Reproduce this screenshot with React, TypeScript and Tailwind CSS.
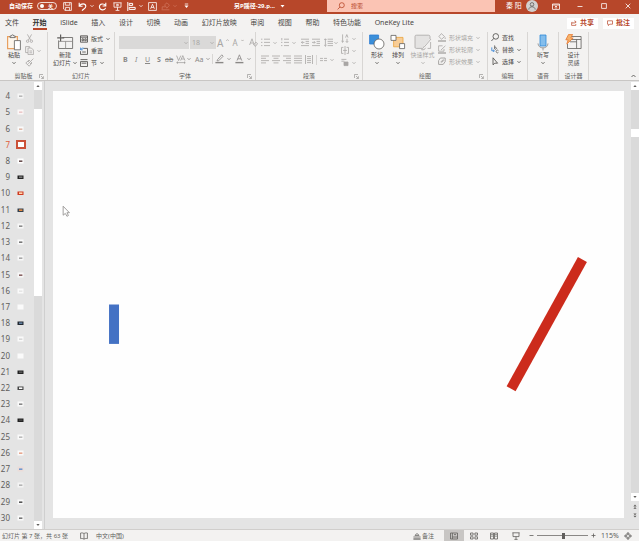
import { useState } from 'react';
import type { ReactNode } from 'react';

interface IconProps {
  w: number;
  h: number;
  children: ReactNode;
  className?: string;
}

function Icon({ w, h, children, className = '' }: IconProps) {
  return (
    <svg
      width={w}
      height={h}
      viewBox={`0 0 ${w} ${h}`}
      fill="none"
      stroke="currentColor"
      strokeWidth="0.8"
      className={`shrink-0 ${className}`}
      aria-hidden="true"
    >
      {children}
    </svg>
  );
}

const Caret = () => (
  <Icon w={4} h={4}>
    <path d="M0.5 1.2 2 2.7 3.5 1.2" />
  </Icon>
);

const SolidCaret = () => (
  <Icon w={5} h={4}>
    <path d="M0.5 1h4L2.5 3.4z" fill="currentColor" stroke="none" />
  </Icon>
);

interface ToolProps {
  label: string;
  children: ReactNode;
  className?: string;
}

function Tool({ label, children, className = '' }: ToolProps) {
  return (
    <button type="button" aria-label={label} className={`flex shrink-0 items-center gap-[3px] whitespace-nowrap ${className}`}>
      {children}
    </button>
  );
}

interface GroupProps {
  label: string;
  width: string;
  launcher?: boolean;
  children: ReactNode;
}

function Group({ label, width, launcher, children }: GroupProps) {
  return (
    <section className={`flex shrink-0 flex-col border-r border-[#d8d6d4] ${width}`}>
      <div className="flex h-[40px] items-start">{children}</div>
      <div className="flex h-[8px] items-center">
        <span className="w-2" />
        <h2 className="flex-1 whitespace-nowrap text-center leading-[8px] text-[#605e5c]">{label}</h2>
        <span className="w-2 text-[#8a8886]">
          {launcher && (
            <button type="button" aria-label={`${label}选项`} className="block">
              <Icon w={5} h={5}>
                <path d="M0.5 4V0.5H4M2 2l2.3 2.3M4.4 2.2v2.3H2.2" strokeWidth="0.6" />
              </Icon>
            </button>
          )}
        </span>
      </div>
    </section>
  );
}

function TitleBar() {
  const [autoSave, setAutoSave] = useState(false);
  const [query, setQuery] = useState('');

  return (
    <header className="flex h-[14px] shrink-0 items-center bg-[#b7472a] pb-[2px] text-white">
      <div className="flex w-[226px] shrink-0 items-center pl-[9px]">
        <label htmlFor="autosave" className="font-bold">自动保存</label>
        <input
          id="autosave"
          type="checkbox"
          checked={autoSave}
          onChange={(e) => setAutoSave(e.target.checked)}
          className="peer sr-only"
        />
        <label htmlFor="autosave" className="ml-[4px] flex h-[8px] w-5 items-center rounded-full border border-white/80 pl-[2px]">
          <span className="h-[4px] w-[4px] rounded-full bg-white" />
          <span className="ml-[4px] text-[5px] font-bold leading-none">关</span>
        </label>
        <Tool label="保存" className="ml-[6px]">
          <Icon w={9} h={9}>
            <path d="M0.6 0.6h7.8v7.8H2L0.6 7zM2.3 0.6v2.6h4.5V0.6M2.6 8.3V5.4h4v2.9" />
          </Icon>
        </Tool>
        <Tool label="撤消" className="ml-[6px] gap-[2px]">
          <Icon w={9} h={9}>
            <path d="M1.2 0.8v3.4h3.4M1.4 4C3 1.2 7.6 1 7.8 4.2 7.8 6.2 5.5 7 4 8.6" strokeWidth="1.1" />
          </Icon>
          <Caret />
        </Tool>
        <Tool label="恢复" className="ml-[4px]">
          <Icon w={9} h={9}>
            <path d="M7.8 0.8v3.2H4.6M7.6 3.6C6 1.2 1.6 1.4 1.4 4.8 1.6 8.4 6.6 9 7.6 5.8" strokeWidth="1.1" />
          </Icon>
        </Tool>
        <Tool label="从头开始" className="ml-[6px]">
          <Icon w={9} h={9}>
            <path d="M0.4 0.8h8.2M1 0.8v4.4h7V0.8M4.5 5.2v3M2.6 8.4h3.8M3.8 2v2.2L5.8 3z" />
          </Icon>
        </Tool>
        <Tool label="对齐" className="ml-[5px] gap-[3px]">
          <Icon w={9} h={9}>
            <path d="M0.8 0v9M2.2 1.4h3.4v2H2.2zM2.2 5.4h6v2h-6z" strokeWidth="1" />
          </Icon>
          <Caret />
        </Tool>
        <Tool label="文本框" className="ml-[5px]">
          <Icon w={9} h={9}>
            <path d="M0.6 0.6h7.8v7.8H0.6zM2.6 6.8l1.9-4.6 1.9 4.6M3.2 5.4h2.6" />
          </Icon>
        </Tool>
        <Tool label="形状" className="ml-[4px] gap-[3px] text-[#d0745c]">
          <Icon w={9} h={9}>
            <path d="M0.6 7.8h7.8M1.2 7.4V4.8h3M3.6 2.8 6 0.8l2.4 2.4-2.6 3z" />
          </Icon>
          <Caret />
        </Tool>
        <Tool label="自定义快速访问工具栏" className="ml-[7px]">
          <Icon w={5} h={6}>
            <path d="M0.8 1h3.4" />
            <path d="M0.5 2.6h4L2.5 5z" fill="currentColor" stroke="none" />
          </Icon>
        </Tool>
      </div>
      <div className="flex flex-1 items-center gap-[5px] whitespace-nowrap pl-2">
        <h1 className="font-bold">另P蹊径-29.p...</h1>
        <SolidCaret />
      </div>
      <label className="mr-[11px] flex h-[12px] w-[26.3%] shrink-0 items-center gap-[6px] bg-[#fbc4b4] pl-[10px] text-[#b7472a]">
        <Icon w={8} h={8}>
          <circle cx="4.8" cy="3.2" r="2.5" />
          <path d="M3 5 0.6 7.4" />
        </Icon>
        <input
          type="text"
          aria-label="搜索"
          value={query}
          onChange={(e) => setQuery(e.target.value)}
          placeholder="搜索"
          className="min-w-0 flex-1 bg-transparent outline-none placeholder:text-[#b7472a]"
        />
      </label>
      <div className="flex w-[133px] shrink-0 items-center">
        <span className="text-[7px]">秦 阳</span>
        <button type="button" aria-label="帐户" className="ml-[4px] h-[12px]">
          <Icon w={12} h={12}>
            <circle cx="6" cy="6" r="6" fill="#d2d0ce" stroke="none" />
            <circle cx="6" cy="4.4" r="1.8" stroke="#605e5c" />
            <path d="M2.8 9.6C3 5.8 9 5.8 9.2 9.6" stroke="#605e5c" />
          </Icon>
        </button>
        <Tool label="功能区显示选项" className="ml-[14px]">
          <Icon w={8} h={7}>
            <path d="M0.5 1h7v5.4h-7zM0.5 2h7M4 5.8V3.2M2.8 4.2 4 3l1.2 1.2" />
          </Icon>
        </Tool>
        <Tool label="最小化" className="ml-[17px]">
          <Icon w={6} h={6}><path d="M0.5 3.5h5" /></Icon>
        </Tool>
        <Tool label="最大化" className="ml-[18px]">
          <Icon w={6} h={6}><path d="M0.6 0.6h4.8v4.8H0.6z" /></Icon>
        </Tool>
        <Tool label="关闭" className="ml-[18px]">
          <Icon w={6} h={6}><path d="M0.7 0.7l4.6 4.6M5.3 0.7 0.7 5.3" /></Icon>
        </Tool>
      </div>
    </header>
  );
}

const TABS = ['文件', '开始', 'iSlide', '插入', '设计', '切换', '动画', '幻灯片放映', '审阅', '视图', '帮助', '特色功能', 'OneKey Lite'];

function TabBar() {
  const [active, setActive] = useState('开始');

  return (
    <div className="flex h-[18px] shrink-0 items-center justify-between pr-[5px]">
      <nav className="flex w-[414px] justify-between pl-[5px] text-[7px]">
        {TABS.map((tab) => (
          <button
            key={tab}
            type="button"
            onClick={() => setActive(tab)}
            className={
              tab === active
                ? 'whitespace-nowrap border-y-2 border-t-transparent border-b-[#b7472a] font-bold leading-[10px] text-[#323130]'
                : 'whitespace-nowrap border-y-2 border-transparent leading-[10px] text-[#484644]'
            }
          >
            {tab}
          </button>
        ))}
      </nav>
      <div className="flex gap-[5px] text-[7px] font-bold text-[#b7472a]">
        <button type="button" className="flex h-[11px] items-center gap-[3px] bg-white px-[4px]">
          <Icon w={6} h={6}>
            <path d="M1.8 2.4H0.6v3h4.2V4M1.8 4C2 2.6 3 2 4.6 2M3.6 0.6 5.2 2 3.6 3.4" strokeWidth="0.7" />
          </Icon>
          共享
        </button>
        <button type="button" className="flex h-[11px] items-center gap-[3px] bg-white px-[4px]">
          <Icon w={6} h={6}>
            <path d="M0.5 0.8h5v3.4H2.8L1.4 5.6V4.2H0.5z" strokeWidth="0.7" />
          </Icon>
          批注
        </button>
      </div>
    </div>
  );
}

function ClipboardGroup() {
  return (
    <Group label="剪贴板" width="w-[48px]" launcher>
      <button type="button" className="ml-[6px] mt-[2px] flex w-4 flex-col items-center">
        <Icon w={16} h={17}>
          <path d="M1.6 2.6h9.8v12H1.6z" stroke="#e8a060" strokeWidth="1.2" fill="#fdf6ec" />
          <path d="M4 3.6V2h1.4C5.6 0.4 7.6 0.4 7.8 2h1.4v1.6z" stroke="#605e5c" fill="#f3f2f1" />
          <path d="M8.4 6.6h6v9.2h-6z" stroke="#605e5c" fill="#fff" />
        </Icon>
        <span className="whitespace-nowrap leading-[8px]">粘贴</span>
        <span className="mt-[2px]"><Caret /></span>
      </button>
      <div className="ml-[3px] mt-[2px] flex flex-col gap-[3px] text-[#a8a6a4]">
        <Tool label="剪切" className="h-[9px]">
          <Icon w={9} h={9}>
            <path d="M2.4 0.4l3.2 5.6M6.6 0.4 3.4 6" />
            <circle cx="2.6" cy="7.2" r="1.2" />
            <circle cx="6.4" cy="7.2" r="1.2" />
          </Icon>
        </Tool>
        <Tool label="复制" className="h-[9px]">
          <Icon w={9} h={9}>
            <path d="M3 6.6H0.6v-6h4v1.2M3 2h3.4l2 2v4.6H3zM4.4 5h2.6M4.4 6.8h2.6" />
          </Icon>
          <Caret />
        </Tool>
        <Tool label="格式刷" className="h-[9px]">
          <Icon w={9} h={9}>
            <path d="M8.4 0.6 5.8 3.2M4 2l3 3-1 1-3-3zM3 3 0.8 5l3.4 3.2L6 6M2.4 6.4l1.4-1.2" />
          </Icon>
        </Tool>
      </div>
    </Group>
  );
}

function SlidesGroup() {
  return (
    <Group label="幻灯片" width="w-[67px]">
      <button type="button" className="ml-[4px] mt-[2px] flex w-[26px] flex-col items-center">
        <Icon w={17} h={17}>
          <path d="M5.5 3.5H15.6v11H1.6V6.4" stroke="#605e5c" />
          <path d="M3.6 0.4v7M0.2 3.8h7" stroke="#605e5c" strokeWidth="1.2" />
          <path d="M2 7.4h13.4M8.6 7.4v7" stroke="#8a8886" />
        </Icon>
        <span className="whitespace-nowrap leading-[8px]">新建</span>
        <span className="flex items-center gap-[2px] whitespace-nowrap leading-[8px]">幻灯片 <Caret /></span>
      </button>
      <div className="ml-[2px] mt-[2px] flex flex-col gap-[3px]">
        <Tool label="版式" className="h-[9px] gap-[2px]">
          <Icon w={8} h={8}>
            <path d="M0.5 0.8h7v6.4h-7zM0.5 2.2h7M2 3.8h1.4v2H2zM4.8 3.8h1.4v2H4.8z" />
          </Icon>
          版式 <Caret />
        </Tool>
        <Tool label="重置" className="h-[9px] gap-[2px]">
          <Icon w={8} h={8}>
            <path d="M3.6 1.4h3.9v6h-7V4.2M2.2 5h3.6" />
            <path d="M0.6 0.6v2.2h2.2M0.8 2.6C1.6 1 3 0.8 4 1.6" stroke="#2b7cd3" />
          </Icon>
          重置
        </Tool>
        <Tool label="节" className="h-[9px] gap-[2px]">
          <Icon w={8} h={8}>
            <path d="M0.5 0.6h7M0.5 2.6h7v4.9h-7z" />
            <path d="M1.6 4.2h4.8" />
          </Icon>
          节 <Caret />
        </Tool>
      </div>
    </Group>
  );
}

function FontGroup() {
  return (
    <Group label="字体" width="w-[141px]" launcher>
      <div className="flex flex-1 flex-col pl-[4px] pt-[4px] text-[#a8a6a4]">
        <div className="flex h-[13px] items-center">
          <label className="relative flex h-[13px] w-[70px] items-center bg-[#dad9d8]">
            <select aria-label="字体" className="h-full w-full appearance-none outline-none" />
            <span className="pointer-events-none absolute right-px"><Caret /></span>
          </label>
          <label className="relative ml-px flex h-[13px] w-[26px] items-center bg-[#dad9d8]">
            <select aria-label="字号" className="h-full w-full appearance-none pl-[2px] text-[7px] outline-none">
              <option>18</option>
            </select>
            <span className="pointer-events-none absolute right-[2px]"><Caret /></span>
          </label>
          <Tool label="增大字号" className="ml-px gap-0 text-[10px] leading-none">
            A<Icon w={3} h={8}><path d="M0.3 1.8 1.5 0.6l1.2 1.2" /></Icon>
          </Tool>
          <Tool label="减小字号" className="ml-[3px] gap-0 text-[8px] leading-none">
            A<Icon w={3} h={8}><path d="M0.3 0.8 1.5 2l1.2-1.2" /></Icon>
          </Tool>
          <Tool label="清除格式" className="ml-[5px]">
            <Icon w={9} h={9}>
              <path d="M0.6 7 3 0.8 5.2 7M1.4 5h3M4.6 6.8l2.2-2.6 1.8 1.4-2.2 2.8z" />
            </Icon>
          </Tool>
        </div>
        <div className="mt-[4px] flex h-[12px] items-center text-[7px] leading-none text-[#8a8886]">
          <Tool label="加粗" className="ml-[4px] w-[6px] font-bold">B</Tool>
          <Tool label="倾斜" className="ml-[6px] w-[4px] italic">I</Tool>
          <Tool label="下划线" className="ml-[6px] w-[6px] underline">U</Tool>
          <Tool label="文字阴影" className="ml-[6px] w-[4px] font-bold">S</Tool>
          <Tool label="删除线" className="ml-[4px] w-[8px] line-through">ab</Tool>
          <Tool label="字符间距" className="ml-[3px] gap-px">
            <Icon w={10} h={9}>
              <path d="M0.6 0.6 2.6 5.6 4.8 0.6M4.6 5.6 6.8 0.6 9 5.6M5.4 4h2.8M0.6 7.6h8.6M2 6.6l-1.2 1L2 8.6M8 6.6l1.2 1L8 8.6" strokeWidth="0.6" />
            </Icon>
            <Caret />
          </Tool>
          <Tool label="更改大小写" className="ml-[4px] gap-[2px]">Aa<Caret /></Tool>
          <span className="ml-[2px] h-[10px] w-px bg-[#d8d6d4]" />
          <Tool label="突出显示颜色" className="ml-[2px] gap-[2px]">
            <Icon w={9} h={10}>
              <path d="M2.4 5.8 6.8 0.8l1.4 1.4-4.6 4.6H2z" />
              <path d="M0.4 8.6h8" strokeWidth="1.4" />
            </Icon>
            <Caret />
          </Tool>
          <Tool label="字体颜色" className="ml-[4px] gap-[2px]">
            <Icon w={9} h={10}>
              <path d="M2 6.6 4.4 0.8l2.4 5.8M2.8 4.8h3.2" />
              <path d="M0.4 8.6h8" strokeWidth="1.4" />
            </Icon>
            <Caret />
          </Tool>
        </div>
      </div>
    </Group>
  );
}

const ALIGNMENTS = [
  { label: '左对齐', d: 'M0 1h8M0 3.3h5M0 5.6h8M0 7.9h5' },
  { label: '居中', d: 'M0 1h8M1.5 3.3h5M0 5.6h8M1.5 7.9h5' },
  { label: '右对齐', d: 'M0 1h8M3 3.3h5M0 5.6h8M3 7.9h5' },
  { label: '两端对齐', d: 'M0 1h8M0 3.3h8M0 5.6h8M0 7.9h8' },
  { label: '分散对齐', d: 'M0.5 0v9M7.5 0v9M2 1.6h4M2 3.6h4M2 5.6h4M2 7.6h4' },
];

function ParagraphGroup() {
  return (
    <Group label="段落" width="w-[107px]" launcher>
      <div className="flex w-[84px] flex-col pl-[5px] pt-[5px] text-[#a8a6a4]">
        <div className="flex h-[11px] items-center">
          <Tool label="项目符号">
            <Icon w={9} h={9}><path d="M0 1.2h1.4M0 4.4h1.4M0 7.6h1.4M3 1.2h6M3 4.4h6M3 7.6h6" /></Icon>
            <Caret />
          </Tool>
          <Tool label="编号" className="ml-[4px]">
            <Icon w={8} h={9}><path d="M0.8 0v2.4M0 4.4h1.4M0 7.6h1.4M3 1.2h5M3 4.4h5M3 7.6h5" /></Icon>
            <Caret />
          </Tool>
          <Tool label="减少缩进" className="ml-[5px]">
            <Icon w={8} h={9}><path d="M0 1.2h8M4.6 3.4H8M4.6 5.4H8M0 7.6h8M3.4 4.4H0.4M1.6 3.2 0.4 4.4l1.2 1.2" /></Icon>
          </Tool>
          <Tool label="增加缩进" className="ml-[3px]">
            <Icon w={8} h={9}><path d="M0 1.2h8M4.6 3.4H8M4.6 5.4H8M0 7.6h8M0 4.4h3M2 3.2l1.2 1.2L2 5.6" /></Icon>
          </Tool>
          <Tool label="行距" className="ml-[4px] gap-px">
            <Icon w={9} h={9}><path d="M3.6 1.2H9M3.6 3.4H9M3.6 5.4H9M3.6 7.6H9M1.4 0.8v7.4M0.2 2l1.2-1.2L2.6 2M0.2 7l1.2 1.2L2.6 7" /></Icon>
            <Caret />
          </Tool>
        </div>
        <div className="mt-[6px] flex h-[11px] items-center gap-[3px]">
          {ALIGNMENTS.map((a) => (
            <Tool key={a.label} label={a.label}>
              <Icon w={8} h={9}><path d={a.d} /></Icon>
            </Tool>
          ))}
          <span className="h-[10px] w-px bg-[#d8d6d4]" />
          <Tool label="分栏" className="gap-[2px]">
            <Icon w={7} h={9}><path d="M0 3.4h3M4 3.4h3M0 5.6h3M4 5.6h3" /></Icon>
            <Caret />
          </Tool>
        </div>
      </div>
      <div className="ml-px mt-[2px] flex flex-col gap-[3px] text-[#a8a6a4]">
        <Tool label="文字方向" className="h-[9px] gap-[2px]">
          <Icon w={8} h={9}><path d="M1.6 0.4v7.8M0.4 7l1.2 1.2L2.8 7M4.6 3.6l1.2-3 1.2 3M6 4.8v3.6M4.8 7.2 6 8.4l1.2-1.2" /></Icon>
          <Caret />
        </Tool>
        <Tool label="对齐文本" className="h-[9px] gap-[2px]">
          <Icon w={8} h={9}><path d="M2.4 1.4H0.5v6h1.9M5.6 1.4h1.9v6H5.6M4 0v9M2 4.4h4" /></Icon>
          <Caret />
        </Tool>
        <Tool label="转换为 SmartArt" className="h-[9px] gap-[2px]">
          <Icon w={8} h={9}>
            <path d="M0.4 1.4h5M0.4 3.2h3" />
            <path d="M3 4h4v3.6H3z" fill="currentColor" />
          </Icon>
          <Caret />
        </Tool>
      </div>
    </Group>
  );
}

function DrawingGroup() {
  return (
    <Group label="绘图" width="w-[125px]" launcher>
      <button type="button" className="ml-[6px] mt-[2px] flex w-4 flex-col items-center">
        <Icon w={16} h={17}>
          <path d="M0.6 1h9v9h-9z" fill="#3b8fd9" stroke="#2b7cd3" />
          <circle cx="10" cy="10" r="5" fill="#fff" stroke="#605e5c" />
        </Icon>
        <span className="whitespace-nowrap leading-[8px]">形状</span>
        <span className="mt-[2px]"><Caret /></span>
      </button>
      <button type="button" className="ml-[5px] mt-[2px] flex w-4 flex-col items-center">
        <Icon w={16} h={17}>
          <path d="M3.6 3.4h9.4v9.4H3.6z" fill="#f8cd96" stroke="#e8a33d" />
          <path d="M1 1.4h5v5H1zM9.6 9.6h5v5h-5z" fill="#fff" stroke="#605e5c" />
        </Icon>
        <span className="whitespace-nowrap leading-[8px]">排列</span>
        <span className="mt-[2px]"><Caret /></span>
      </button>
      <button type="button" className="ml-[4px] mt-[2px] flex w-[25px] flex-col items-center text-[#a8a6a4]">
        <Icon w={18} h={17}>
          <path d="M8 14.4H2.4C1.4 14.4 1 14 1 13V2.6C1 1.6 1.4 1.2 2.4 1.2h12C15.4 1.2 16 1.6 16 2.6V5" fill="#e4e3e2" />
          <path d="M17 5 10.6 12.6M10.6 12l-3 3.8c2 0.2 3.4-0.4 4-2M16.6 8v6.4h-3" />
        </Icon>
        <span className="whitespace-nowrap leading-[8px]">快速样式</span>
        <span className="mt-[2px]"><Caret /></span>
      </button>
      <div className="ml-[3px] mt-px flex flex-col gap-[3px] text-[#a8a6a4]">
        <Tool label="形状填充" className="h-[9px] gap-[2px]">
          <Icon w={8} h={9}>
            <path d="M3.4 0.6 6.6 3.6 3.6 6.2 0.8 3.6zM7.2 4.4v1.6" />
            <path d="M0 8h8" strokeWidth="1.4" />
          </Icon>
          形状填充 <Caret />
        </Tool>
        <Tool label="形状轮廓" className="h-[9px] gap-[2px]">
          <Icon w={8} h={9}>
            <path d="M4.6 0.8H0.6v5.4h5.4V4M7.4 0.8 3 5" />
            <path d="M0 8h8" strokeWidth="1.4" />
          </Icon>
          形状轮廓 <Caret />
        </Tool>
        <Tool label="形状效果" className="h-[9px] gap-[2px]">
          <Icon w={8} h={9}>
            <path d="M2.4 1h4.8v3.6L5.2 7.4H0.6V3.6zM2.6 5.2 5.4 2.4M3.6 5.6 6 3.2" strokeWidth="1" />
          </Icon>
          形状效果 <Caret />
        </Tool>
      </div>
    </Group>
  );
}

function EditingGroup() {
  return (
    <Group label="编辑" width="w-[40px]">
      <div className="ml-[3px] mt-px flex flex-col gap-[3px]">
        <Tool label="查找" className="h-[9px] gap-[2px]">
          <Icon w={8} h={9}>
            <circle cx="4.8" cy="3.4" r="2.8" />
            <path d="M2.8 5.4 0.4 8" />
          </Icon>
          查找
        </Tool>
        <Tool label="替换" className="h-[9px] gap-[2px]">
          <Icon w={8} h={9}>
            <path d="M3.6 0.4v3.4M3.6 2.8a1 1 0 1 1 0 1M7.4 5.6a1.3 1.3 0 1 0 0 1.8" strokeWidth="0.7" />
            <path d="M0.8 2.4v3.4h2.4M2.2 4.8l1.2 1-1.2 1" stroke="#2b7cd3" />
          </Icon>
          替换 <Caret />
        </Tool>
        <Tool label="选择" className="h-[9px] gap-[2px]">
          <Icon w={8} h={9}>
            <path d="M2 0.8v7l1.8-1.6h2.8z" />
          </Icon>
          选择 <Caret />
        </Tool>
      </div>
    </Group>
  );
}

function Ribbon() {
  return (
    <div className="flex h-[49px] shrink-0 justify-between border-b border-[#c8c6c4] text-[#484644]">
      <div className="flex min-w-0">
        <ClipboardGroup />
        <SlidesGroup />
        <FontGroup />
        <ParagraphGroup />
        <DrawingGroup />
        <EditingGroup />
        <Group label="语音" width="w-[31px]">
          <button type="button" className="mx-auto mt-[2px] flex flex-col items-center">
            <Icon w={12} h={17}>
              <path d="M3 1h6v11H3z" fill="#83bdec" stroke="#2b88d8" />
              <path d="M1 9.4c0 6 10 6 10 0M6 13.8v2.6" stroke="#8a8886" />
            </Icon>
            <span className="whitespace-nowrap leading-[8px]">听写</span>
            <span className="mt-[2px]"><Caret /></span>
          </button>
        </Group>
        <Group label="设计器" width="w-[30px]">
          <button type="button" className="mx-auto mt-[2px] flex flex-col items-center leading-[8px]">
            <Icon w={17} h={17}>
              <path d="M5.5 2.5h10.6v12H2.5V10M6 5.5h10M11.6 5.5v9M5 7.8h6.4" stroke="#605e5c" />
              <path d="M3.6 0.4h4L5.8 4h2.4L1.8 10l1.4-4.2H0.8z" fill="#f5b26b" stroke="#e8762c" />
            </Icon>
            <span className="whitespace-nowrap">设计</span>
            <span className="whitespace-nowrap">灵感</span>
          </button>
        </Group>
      </div>
      <button type="button" aria-label="折叠功能区" className="mr-[3px] self-end pb-[2px]">
        <Icon w={5} h={4}><path d="M0.5 3 2.5 1l2 2" /></Icon>
      </button>
    </div>
  );
}

interface Thumb {
  no: number;
  bg: string;
  mark: string;
}

const THUMBS: Thumb[] = [
  { no: 4, bg: '#f6f6f6', mark: '#b8b8b8' },
  { no: 5, bg: '#fbf7f7', mark: '#ecc9c9' },
  { no: 6, bg: '#fafafa', mark: '#e0b8a8' },
  { no: 7, bg: '#ffffff', mark: '' },
  { no: 8, bg: '#ffffff', mark: '#6a5050' },
  { no: 9, bg: '#222222', mark: '#777777' },
  { no: 10, bg: '#cf3a20', mark: '#ffd8b0' },
  { no: 11, bg: '#34404c', mark: '#e88a40' },
  { no: 12, bg: '#f8f8f8', mark: '#8c8c8c' },
  { no: 13, bg: '#fafafa', mark: '#777777' },
  { no: 14, bg: '#f8f8f8', mark: '#a8a8a8' },
  { no: 15, bg: '#f8f8f8', mark: '#8a6464' },
  { no: 16, bg: '#fafafa', mark: '#e6e6e6' },
  { no: 17, bg: '#fafafa', mark: '' },
  { no: 18, bg: '#222831', mark: '#5f7f9f' },
  { no: 19, bg: '#fafafa', mark: '#d8d8d8' },
  { no: 20, bg: '#fafafa', mark: '' },
  { no: 21, bg: '#222222', mark: '#555555' },
  { no: 22, bg: '#444444', mark: '#ffffff' },
  { no: 23, bg: '#fafafa', mark: '#888888' },
  { no: 24, bg: '#222222', mark: '#444444' },
  { no: 25, bg: '#fafafa', mark: '#bbbbbb' },
  { no: 26, bg: '#fafafa', mark: '#e8a890' },
  { no: 27, bg: '#ecdcd8', mark: '#7098d0' },
  { no: 28, bg: '#f4f4f4', mark: '#b4b4b4' },
  { no: 29, bg: '#fafafa', mark: '#555555' },
  { no: 30, bg: '#fafafa', mark: '#777777' },
];

function ThumbIcon({ bg, mark }: Thumb) {
  const dark = bg[1] < '6' || bg === '#cf3a20';
  return (
    <svg width="7" height="6" viewBox="0 0 7 6" className="shrink-0" aria-hidden="true">
      <rect x="0.5" y={dark ? 1.5 : 0.5} width="6" height={dark ? 3.5 : 5} fill={bg} />
      {mark && <rect x="2" y="2.4" width="3.4" height="1.6" fill={mark} />}
    </svg>
  );
}

function SlideRail() {
  const [current, setCurrent] = useState(7);

  return (
    <aside className="flex w-[45px] shrink-0 border-r border-[#cfcfcf]">
      <div className="flex flex-1 flex-col pb-[3px] pt-[7px]">
        {THUMBS.map((thumb) => (
          <button
            key={thumb.no}
            type="button"
            onClick={() => setCurrent(thumb.no)}
            className="flex min-h-0 flex-1 items-center"
          >
            <span
              className={
                thumb.no === current
                  ? 'w-[10px] text-right text-[8px] leading-none text-[#e0603c]'
                  : 'w-[10px] text-right text-[8px] leading-none text-[#605e5c]'
              }
            >
              {thumb.no}
            </span>
            {thumb.no === current ? (
              <span className="ml-[6px] h-[9px] w-[10px] border-2 border-[#cb5138] bg-white" />
            ) : (
              <span className="ml-[7px] flex"><ThumbIcon {...thumb} /></span>
            )}
          </button>
        ))}
      </div>
      <div className="mr-[2px] mt-px flex w-2 flex-col bg-[#dadada]">
        <button type="button" aria-label="向上滚动" className="flex h-2 items-center justify-center bg-white text-[#605e5c]">
          <Icon w={4} h={4}><path d="M0.4 3 2 1l1.6 2z" fill="currentColor" stroke="none" /></Icon>
        </button>
        <div className="flex-1" />
        <div className="flex-10 bg-white" />
        <div className="flex-12" />
        <button type="button" aria-label="向下滚动" className="flex h-2 items-center justify-center bg-white text-[#605e5c]">
          <Icon w={4} h={4}><path d="M0.4 1h3.2L2 3z" fill="currentColor" stroke="none" /></Icon>
        </button>
      </div>
    </aside>
  );
}

function SlideCanvas() {
  return (
    <main className="flex min-w-0 flex-1 pb-[11px] pl-2 pr-[7px] pt-[10px]">
      <div className="flex min-w-0 flex-1 bg-[#fefefe]">
        <svg viewBox="0 0 571 428" className="h-full w-full" role="img" aria-label="幻灯片 7">
          <rect x="55.5" y="214" width="10" height="39.5" fill="#4472c4" />
          <path d="M525.5 166.500 534.500 171.500 463 301 454 296z" fill="#cc2b1c" />
          <path d="M9.5 115.5v9l2.200-1.800 1.600 2.900 1.500-0.800-1.500-2.800h2.500z" fill="#fff" stroke="#8a8886" strokeWidth="0.8" />
        </svg>
      </div>
    </main>
  );
}

function CanvasScroll() {
  return (
    <div className="mt-px flex w-2 shrink-0 flex-col bg-[#dadada] text-[#605e5c]">
      <button type="button" aria-label="上移" className="flex h-2 items-center justify-center bg-white">
        <Icon w={4} h={4}><path d="M0.4 3 2 1l1.6 2z" fill="currentColor" stroke="none" /></Icon>
      </button>
      <div className="flex-10" />
      <div className="h-2 bg-white" />
      <div className="flex-92" />
      <button type="button" aria-label="下移" className="flex h-2 items-center justify-center bg-white">
        <Icon w={4} h={4}><path d="M0.4 1h3.2L2 3z" fill="currentColor" stroke="none" /></Icon>
      </button>
      <div className="flex h-7 flex-col items-center gap-[4px] bg-[#e4e4e4] pt-[3px]">
        <Tool label="上一张幻灯片">
          <Icon w={4} h={5}><path d="M0.4 2.4 2 0.6l1.6 1.8zM0.4 4.8 2 3l1.6 1.8z" fill="currentColor" stroke="none" /></Icon>
        </Tool>
        <Tool label="下一张幻灯片">
          <Icon w={4} h={5}><path d="M0.4 0.4h3.2L2 2.2zM0.4 2.8h3.2L2 4.6z" fill="currentColor" stroke="none" /></Icon>
        </Tool>
      </div>
    </div>
  );
}

function StatusBar() {
  const [zoom, setZoom] = useState(115);

  return (
    <footer className="flex h-[12px] shrink-0 items-center justify-between border-t border-[#d0cecc] bg-[#f3f2f1] pl-[2px] pr-[7px] text-[#605e5c]">
      <div className="flex items-center whitespace-nowrap">
        <span>幻灯片 第 7 张，共 63 张</span>
        <Tool label="拼写检查" className="ml-[12px]">
          <Icon w={8} h={8}><path d="M4 1.6C3 0.8 1.6 0.8 0.6 1v5.6c1-0.2 2.4-0.2 3.4 0.6 1-0.8 2.4-0.8 3.4-0.6V1C6.4 0.8 5 0.8 4 1.6zM4 1.6v5.6" /></Icon>
        </Tool>
        <button type="button" className="ml-2">中文(中国)</button>
      </div>
      <div className="flex items-center whitespace-nowrap">
        <Tool label="备注" className="gap-px">
          <Icon w={8} h={8}>
            <path d="M2 3.4 4 1.4l2 2zM0.4 5h7.2" />
            <path d="M0.4 7h7.2" strokeWidth="1.2" />
          </Icon>
          备注
        </Tool>
        <Tool label="普通" className="ml-[10px] h-[11px] w-5 justify-center bg-[#c8c6c4]">
          <Icon w={8} h={8}><path d="M0.5 1h7v6h-7zM2.4 1v6M2.4 5h5M4 2.6h2" /></Icon>
        </Tool>
        <Tool label="幻灯片浏览" className="h-[11px] w-5 justify-center">
          <Icon w={8} h={8}><path d="M0.5 1h2.6v2.2H0.5zM4.9 1h2.6v2.2H4.9zM0.5 4.8h2.6V7H0.5zM4.9 4.8h2.6V7H4.9z" /></Icon>
        </Tool>
        <Tool label="阅读视图" className="h-[11px] w-5 justify-center">
          <Icon w={8} h={8}><path d="M0.5 1h3v6h-3zM4.5 1h3v6h-3zM1.2 2.6h1.6M1.2 4.2h1.6M5.2 2.6h1.6M5.2 4.2h1.6" /></Icon>
        </Tool>
        <Tool label="幻灯片放映" className="ml-[2px] h-[11px] w-5 justify-center">
          <Icon w={8} h={8}><path d="M0.4 0.8h7.2M1 0.8v3.8h6V0.8M4 4.6v2.6M2.4 7.4h3.2" /></Icon>
        </Tool>
        <Tool label="缩小" className="ml-[3px]"><Icon w={5} h={5}><path d="M0.5 2.5h4" /></Icon></Tool>
        <input
          type="range"
          aria-label="缩放"
          min={10}
          max={210}
          value={zoom}
          onChange={(e) => setZoom(Number(e.target.value))}
          className="mx-[3px] h-px w-[51px] appearance-none bg-[#8a8886] [&::-webkit-slider-thumb]:h-[6px] [&::-webkit-slider-thumb]:w-[3px] [&::-webkit-slider-thumb]:appearance-none [&::-webkit-slider-thumb]:bg-[#605e5c]"
        />
        <Tool label="放大"><Icon w={5} h={5}><path d="M0.5 2.5h4M2.5 0.5v4" /></Icon></Tool>
        <button type="button" className="ml-[5px] w-[22px] text-left text-[7px]">{zoom}%</button>
        <Tool label="使幻灯片适应当前窗口" className="ml-px">
          <Icon w={8} h={8}><path d="M2.6 2.6h2.8v2.8H2.6zM4 0.3 5.2 1.6H2.8zM4 7.7 5.2 6.4H2.8zM0.3 4l1.3-1.2v2.4zM7.7 4 6.4 2.8v2.4z" strokeWidth="0.7" /></Icon>
        </Tool>
      </div>
    </footer>
  );
}

export default function App() {
  return (
    <div className="flex h-screen flex-col overflow-hidden bg-[#f3f2f1] font-['Noto_Sans','Noto_Sans_CJK_SC',sans-serif] text-[6px] leading-[8px]">
      <TitleBar />
      <TabBar />
      <Ribbon />
      <div className="flex min-h-0 flex-1 bg-[#e4e4e4]">
        <SlideRail />
        <SlideCanvas />
        <CanvasScroll />
      </div>
      <StatusBar />
    </div>
  );
}
